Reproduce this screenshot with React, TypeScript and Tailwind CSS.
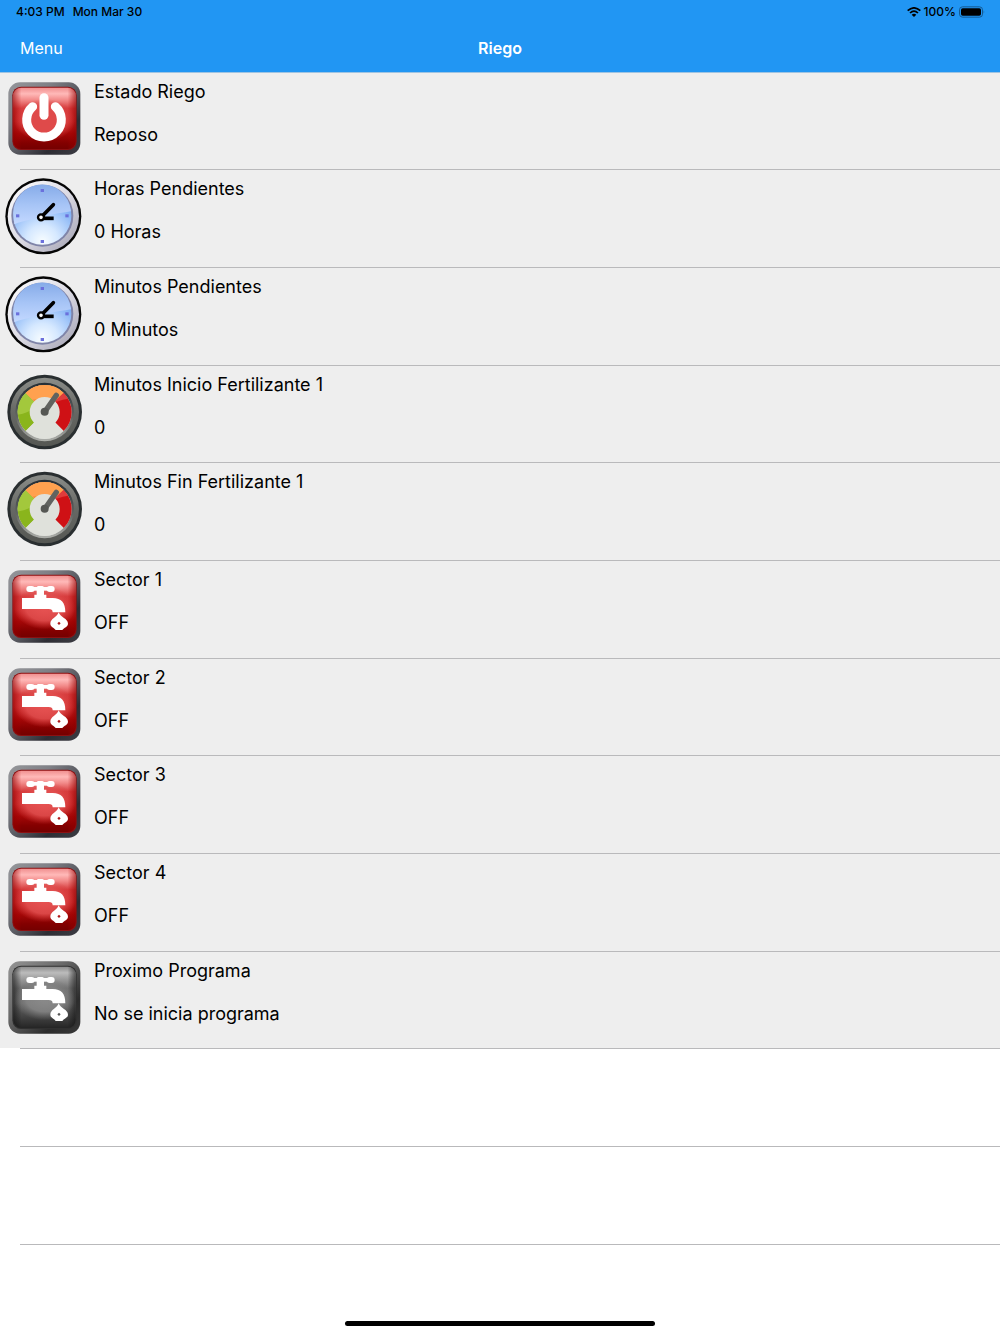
import type { ReactNode } from "react";

function Icon({ label, children }: { label: string; children: ReactNode }) {
  return (
    <svg viewBox="0 0 270 270" role="img" aria-label={label} className="mt-1 size-[90px] shrink-0">
      {children}
    </svg>
  );
}

function Definitions() {
  return (
    <svg aria-hidden="true" className="absolute size-0">
      <defs>
        <linearGradient id="bevel" x1="0" y1="0" x2="1" y2="1">
          <stop offset="0" stopColor="#96979b" />
          <stop offset="0.3" stopColor="#7f8086" />
          <stop offset="0.52" stopColor="#5a5b62" />
          <stop offset="0.75" stopColor="#2d2d34" />
          <stop offset="1" stopColor="#3c3c43" />
        </linearGradient>
        <linearGradient id="bevelDark" x1="0" y1="0" x2="1" y2="1">
          <stop offset="0" stopColor="#959595" />
          <stop offset="0.4" stopColor="#686868" />
          <stop offset="0.75" stopColor="#2c2c2c" />
          <stop offset="1" stopColor="#383838" />
        </linearGradient>
        <linearGradient id="redFace" x1="0" y1="0" x2="0" y2="1">
          <stop offset="0" stopColor="#f08f8f" />
          <stop offset="0.1" stopColor="#ffb9b8" />
          <stop offset="0.2" stopColor="#f28a89" />
          <stop offset="0.34" stopColor="#d63c3d" />
          <stop offset="0.55" stopColor="#cc2b2c" />
          <stop offset="0.75" stopColor="#a30707" />
          <stop offset="0.9" stopColor="#830000" />
          <stop offset="1" stopColor="#750000" />
        </linearGradient>
        <linearGradient id="grayFace" x1="0" y1="0" x2="0" y2="1">
          <stop offset="0" stopColor="#8c8c8c" />
          <stop offset="0.1" stopColor="#bcbcbc" />
          <stop offset="0.2" stopColor="#9c9c9c" />
          <stop offset="0.35" stopColor="#737373" />
          <stop offset="0.6" stopColor="#686868" />
          <stop offset="0.77" stopColor="#4a4a4a" />
          <stop offset="1" stopColor="#252525" />
        </linearGradient>
        <linearGradient id="sideShade" x1="0" y1="0" x2="1" y2="0">
          <stop offset="0" stopColor="#900000" stopOpacity="0.6" />
          <stop offset="0.13" stopColor="#b00000" stopOpacity="0" />
          <stop offset="0.87" stopColor="#b00000" stopOpacity="0" />
          <stop offset="1" stopColor="#900000" stopOpacity="0.6" />
        </linearGradient>
        <linearGradient id="sideShadeGray" x1="0" y1="0" x2="1" y2="0">
          <stop offset="0" stopColor="#111" stopOpacity="0.6" />
          <stop offset="0.13" stopColor="#111" stopOpacity="0" />
          <stop offset="0.87" stopColor="#111" stopOpacity="0" />
          <stop offset="1" stopColor="#111" stopOpacity="0.6" />
        </linearGradient>
        <radialGradient id="redCore">
          <stop offset="0" stopColor="#e65252" />
          <stop offset="0.6" stopColor="#e35050" stopOpacity="0.85" />
          <stop offset="1" stopColor="#d83c3c" stopOpacity="0" />
        </radialGradient>
        <radialGradient id="grayCore">
          <stop offset="0" stopColor="#8a8a8a" />
          <stop offset="0.6" stopColor="#868686" stopOpacity="0.85" />
          <stop offset="1" stopColor="#707070" stopOpacity="0" />
        </radialGradient>
        <linearGradient id="clockRing" x1="0" y1="0" x2="1" y2="1">
          <stop offset="0" stopColor="#ffffff" />
          <stop offset="0.5" stopColor="#dddce5" />
          <stop offset="1" stopColor="#a09fb0" />
        </linearGradient>
        <radialGradient id="clockFace" cx="0.5" cy="0.95" r="0.7">
          <stop offset="0" stopColor="#f8fdff" />
          <stop offset="0.4" stopColor="#d5e8ff" />
          <stop offset="1" stopColor="#80b0f5" />
        </radialGradient>
        <linearGradient id="clockShine" x1="0" y1="0" x2="0" y2="1">
          <stop offset="0" stopColor="#86abe8" />
          <stop offset="0.5" stopColor="#a6c4f6" />
          <stop offset="1" stopColor="#c3d8ff" />
        </linearGradient>
        <linearGradient id="gaugeRing" x1="0" y1="0" x2="0" y2="1">
          <stop offset="0" stopColor="#8b8d89" />
          <stop offset="0.5" stopColor="#666864" />
          <stop offset="1" stopColor="#555753" />
        </linearGradient>
        <linearGradient id="gaugeRim" x1="0" y1="0" x2="0" y2="1">
          <stop offset="0" stopColor="#252e35" />
          <stop offset="0.6" stopColor="#636664" />
          <stop offset="1" stopColor="#aeb0ab" />
        </linearGradient>
        <clipPath id="gaugeClip">
          <circle cx="134" cy="132" r="81" />
        </clipPath>
      </defs>
    </svg>
  );
}

function Tile({ gray = false }: { gray?: boolean }) {
  return (
    <>
      <rect x="25" y="19" width="216" height="217" rx="35" fill={gray ? "url(#bevelDark)" : "url(#bevel)"} />
      <rect x="37" y="32" width="193" height="190" rx="26" fill={gray ? "#303030" : "#8c1012"} />
      <rect x="40" y="35" width="187" height="184" rx="24" fill={gray ? "url(#grayFace)" : "url(#redFace)"} />
      <rect x="40" y="35" width="187" height="184" rx="24" fill={gray ? "url(#sideShadeGray)" : "url(#sideShade)"} />
      <ellipse cx="134" cy="132" rx="92" ry="64" fill={gray ? "url(#grayCore)" : "url(#redCore)"} />
    </>
  );
}

function PowerIcon() {
  return (
    <Icon label="Estado">
      <Tile />
      <circle cx="132" cy="132" r="45" fill="#df4a4a" />
      <path d="M98 92 A52 52 0 1 0 166 92" fill="none" stroke="#fff" strokeWidth="27" strokeLinecap="round" />
      <path d="M132 65 V118" fill="none" stroke="#fff" strokeWidth="27" strokeLinecap="round" />
    </Icon>
  );
}

function ClockIcon() {
  return (
    <Icon label="Reloj">
      <g transform="translate(0 -3)">
        <circle cx="130" cy="133" r="114" fill="#050505" />
        <circle cx="130" cy="133" r="107" fill="url(#clockRing)" />
        <circle cx="127" cy="131" r="93" fill="#7f84a8" />
        <circle cx="127" cy="131" r="87" fill="url(#clockFace)" />
        <path d="M41 142 A87 87 0 1 1 213 118 C190 122 170 124 145 130 C103 143 72 144 43 157 Z" fill="url(#clockShine)" />
        <g fill="#6b70dc">
          <rect x="122" y="51" width="10" height="9" />
          <rect x="122" y="204" width="10" height="9" />
          <rect x="48" y="127" width="10" height="9" />
          <rect x="196" y="127" width="10" height="9" />
        </g>
        <g fill="none" stroke="#000">
          <path d="M124 135 L160 98" strokeWidth="11" strokeLinecap="round" />
          <path d="M124 139 H161" strokeWidth="11" />
          <circle cx="123" cy="136" r="9" fill="#fff" strokeWidth="7" />
        </g>
      </g>
    </Icon>
  );
}

function GaugeIcon() {
  return (
    <Icon label="Indicador">
      <g transform="translate(0 -3)">
        <circle cx="134" cy="132" r="112" fill="#292e30" />
        <circle cx="134" cy="132" r="103" fill="url(#gaugeRing)" />
        <circle cx="134" cy="132" r="88" fill="url(#gaugeRim)" />
        <circle cx="134" cy="132" r="81" fill="#d9dbd5" />
        <g clipPath="url(#gaugeClip)">
          <path d="M134 132 L77 75 L20 132 L77 189 Z" fill="#8ab51c" />
          <path d="M134 132 L77 75 L40 105 L40 142 Q80 138 98 122 Z" fill="#a3c83c" />
          <path d="M134 132 L77 75 V30 H191 V75 Z" fill="#f58c38" />
          <path d="M77 75 V30 H191 V75 L170 92 Q130 90 97 95 Z" fill="#ffa14f" />
          <path d="M134 132 L191 75 L245 132 L191 189 Z" fill="#cf1115" />
          <path d="M191 75 L204 92 Q190 94 170 101 L165 99 Z" fill="#e03c3c" />
        </g>
        <path d="M102 164 A45 45 0 1 1 166 164 L190 188 Q164 213 134 213 Q104 213 78 188 Z" fill="#dfe1db" />
        <path d="M134 132 L169 82" fill="none" stroke="#61635f" strokeWidth="16" strokeLinecap="round" />
        <circle cx="134" cy="131" r="12" fill="#555753" />
      </g>
    </Icon>
  );
}

function FaucetIcon({ gray = false }: { gray?: boolean }) {
  return (
    <Icon label="Grifo">
      <Tile gray={gray} />
      <g fill="#fff">
        <rect x="79" y="66" width="25" height="18" rx="9" />
        <rect x="140" y="66" width="24" height="18" rx="9" />
        <rect x="98" y="69" width="48" height="11" />
        <rect x="110" y="66" width="22" height="30" rx="5" />
        <path d="M103 92 H139 V102 H158 C184 103 196 115 196 145 H158 C158 137 154 135 146 135 H66 V102 H103 Z" />
        <path fillRule="evenodd" d="M176 145 C181 160 204 164 204 179 C204 189 192 190 187 198 H167 C162 190 151 189 151 179 C151 164 171 160 176 145 Z M177 173 L172 178 L177 183 L182 178 Z" />
      </g>
    </Icon>
  );
}

const redFaucet = <FaucetIcon />;

const rows: { title: string; value: string; icon: ReactNode }[] = [
  { title: "Estado Riego", value: "Reposo", icon: <PowerIcon /> },
  { title: "Horas Pendientes", value: "0 Horas", icon: <ClockIcon /> },
  { title: "Minutos Pendientes", value: "0 Minutos", icon: <ClockIcon /> },
  { title: "Minutos Inicio Fertilizante 1", value: "0", icon: <GaugeIcon /> },
  { title: "Minutos Fin Fertilizante 1", value: "0", icon: <GaugeIcon /> },
  { title: "Sector 1", value: "OFF", icon: redFaucet },
  { title: "Sector 2", value: "OFF", icon: redFaucet },
  { title: "Sector 3", value: "OFF", icon: redFaucet },
  { title: "Sector 4", value: "OFF", icon: redFaucet },
  { title: "Proximo Programa", value: "No se inicia programa", icon: <FaucetIcon gray /> },
];

const separator =
  "relative after:absolute after:top-full after:right-0 after:left-5 after:h-px after:bg-[#b9b9bb]";

function StatusBar() {
  return (
    <div className="flex h-6 items-center justify-between px-4 text-[12px] font-medium text-black">
      <div className="flex gap-2">
        <span>4:03 PM</span>
        <span>Mon Mar 30</span>
      </div>
      <div className="flex items-center gap-[3px]">
        <svg viewBox="0 0 42 30" className="h-[10px] w-[14px]" role="img" aria-label="Wi-Fi">
          <g fill="none" stroke="#000" strokeWidth="5">
            <path d="M2 11 Q21 -6 40 11" />
            <path d="M9 18 Q21 7 33 18" />
          </g>
          <path d="M14 23 Q21 17 28 23 L21 30 Z" />
        </svg>
        <span>100%</span>
        <svg viewBox="0 0 78 36" className="-mr-px h-3 w-[26px]" role="img" aria-label="Battery">
          <rect x="1.5" y="2.5" width="69" height="31" rx="9" fill="none" stroke="#145a93" strokeWidth="3" />
          <rect x="6" y="7" width="60" height="22" rx="5" />
          <path d="M74 13 Q78 18 74 23 Z" fill="#145a93" />
        </svg>
      </div>
    </div>
  );
}

export default function App() {
  return (
    <div className="flex min-h-screen flex-col bg-white font-[Inter,'Liberation_Sans',sans-serif] text-black">
      <Definitions />
      <header className="relative z-10 bg-[#2196f3] shadow-[0_1px_0_#9fc4e2]">
        <StatusBar />
        <nav className="grid h-12 grid-cols-3 items-center px-5 text-[16px] text-white">
          <button type="button" className="justify-self-start">Menu</button>
          <h1 className="text-center font-semibold">Riego</h1>
        </nav>
      </header>
      <main>
        <ul className="bg-[#eeeeee]">
          {rows.map((row) => (
            <li key={row.title} className={`flex min-h-[98px] gap-1 nth-[3n+1]:min-h-[97px] ${separator}`}>
              {row.icon}
              <div className="flex flex-col gap-5 pt-2 text-[18px] leading-[23px]">
                <p>{row.title}</p>
                <p>{row.value}</p>
              </div>
            </li>
          ))}
        </ul>
        <div className={`h-[98px] ${separator}`} />
        <div className={`h-[98px] ${separator}`} />
      </main>
      <footer className="mt-auto flex justify-center pb-2">
        <div className="h-[5px] w-[31%] rounded-full bg-black" />
      </footer>
    </div>
  );
}
